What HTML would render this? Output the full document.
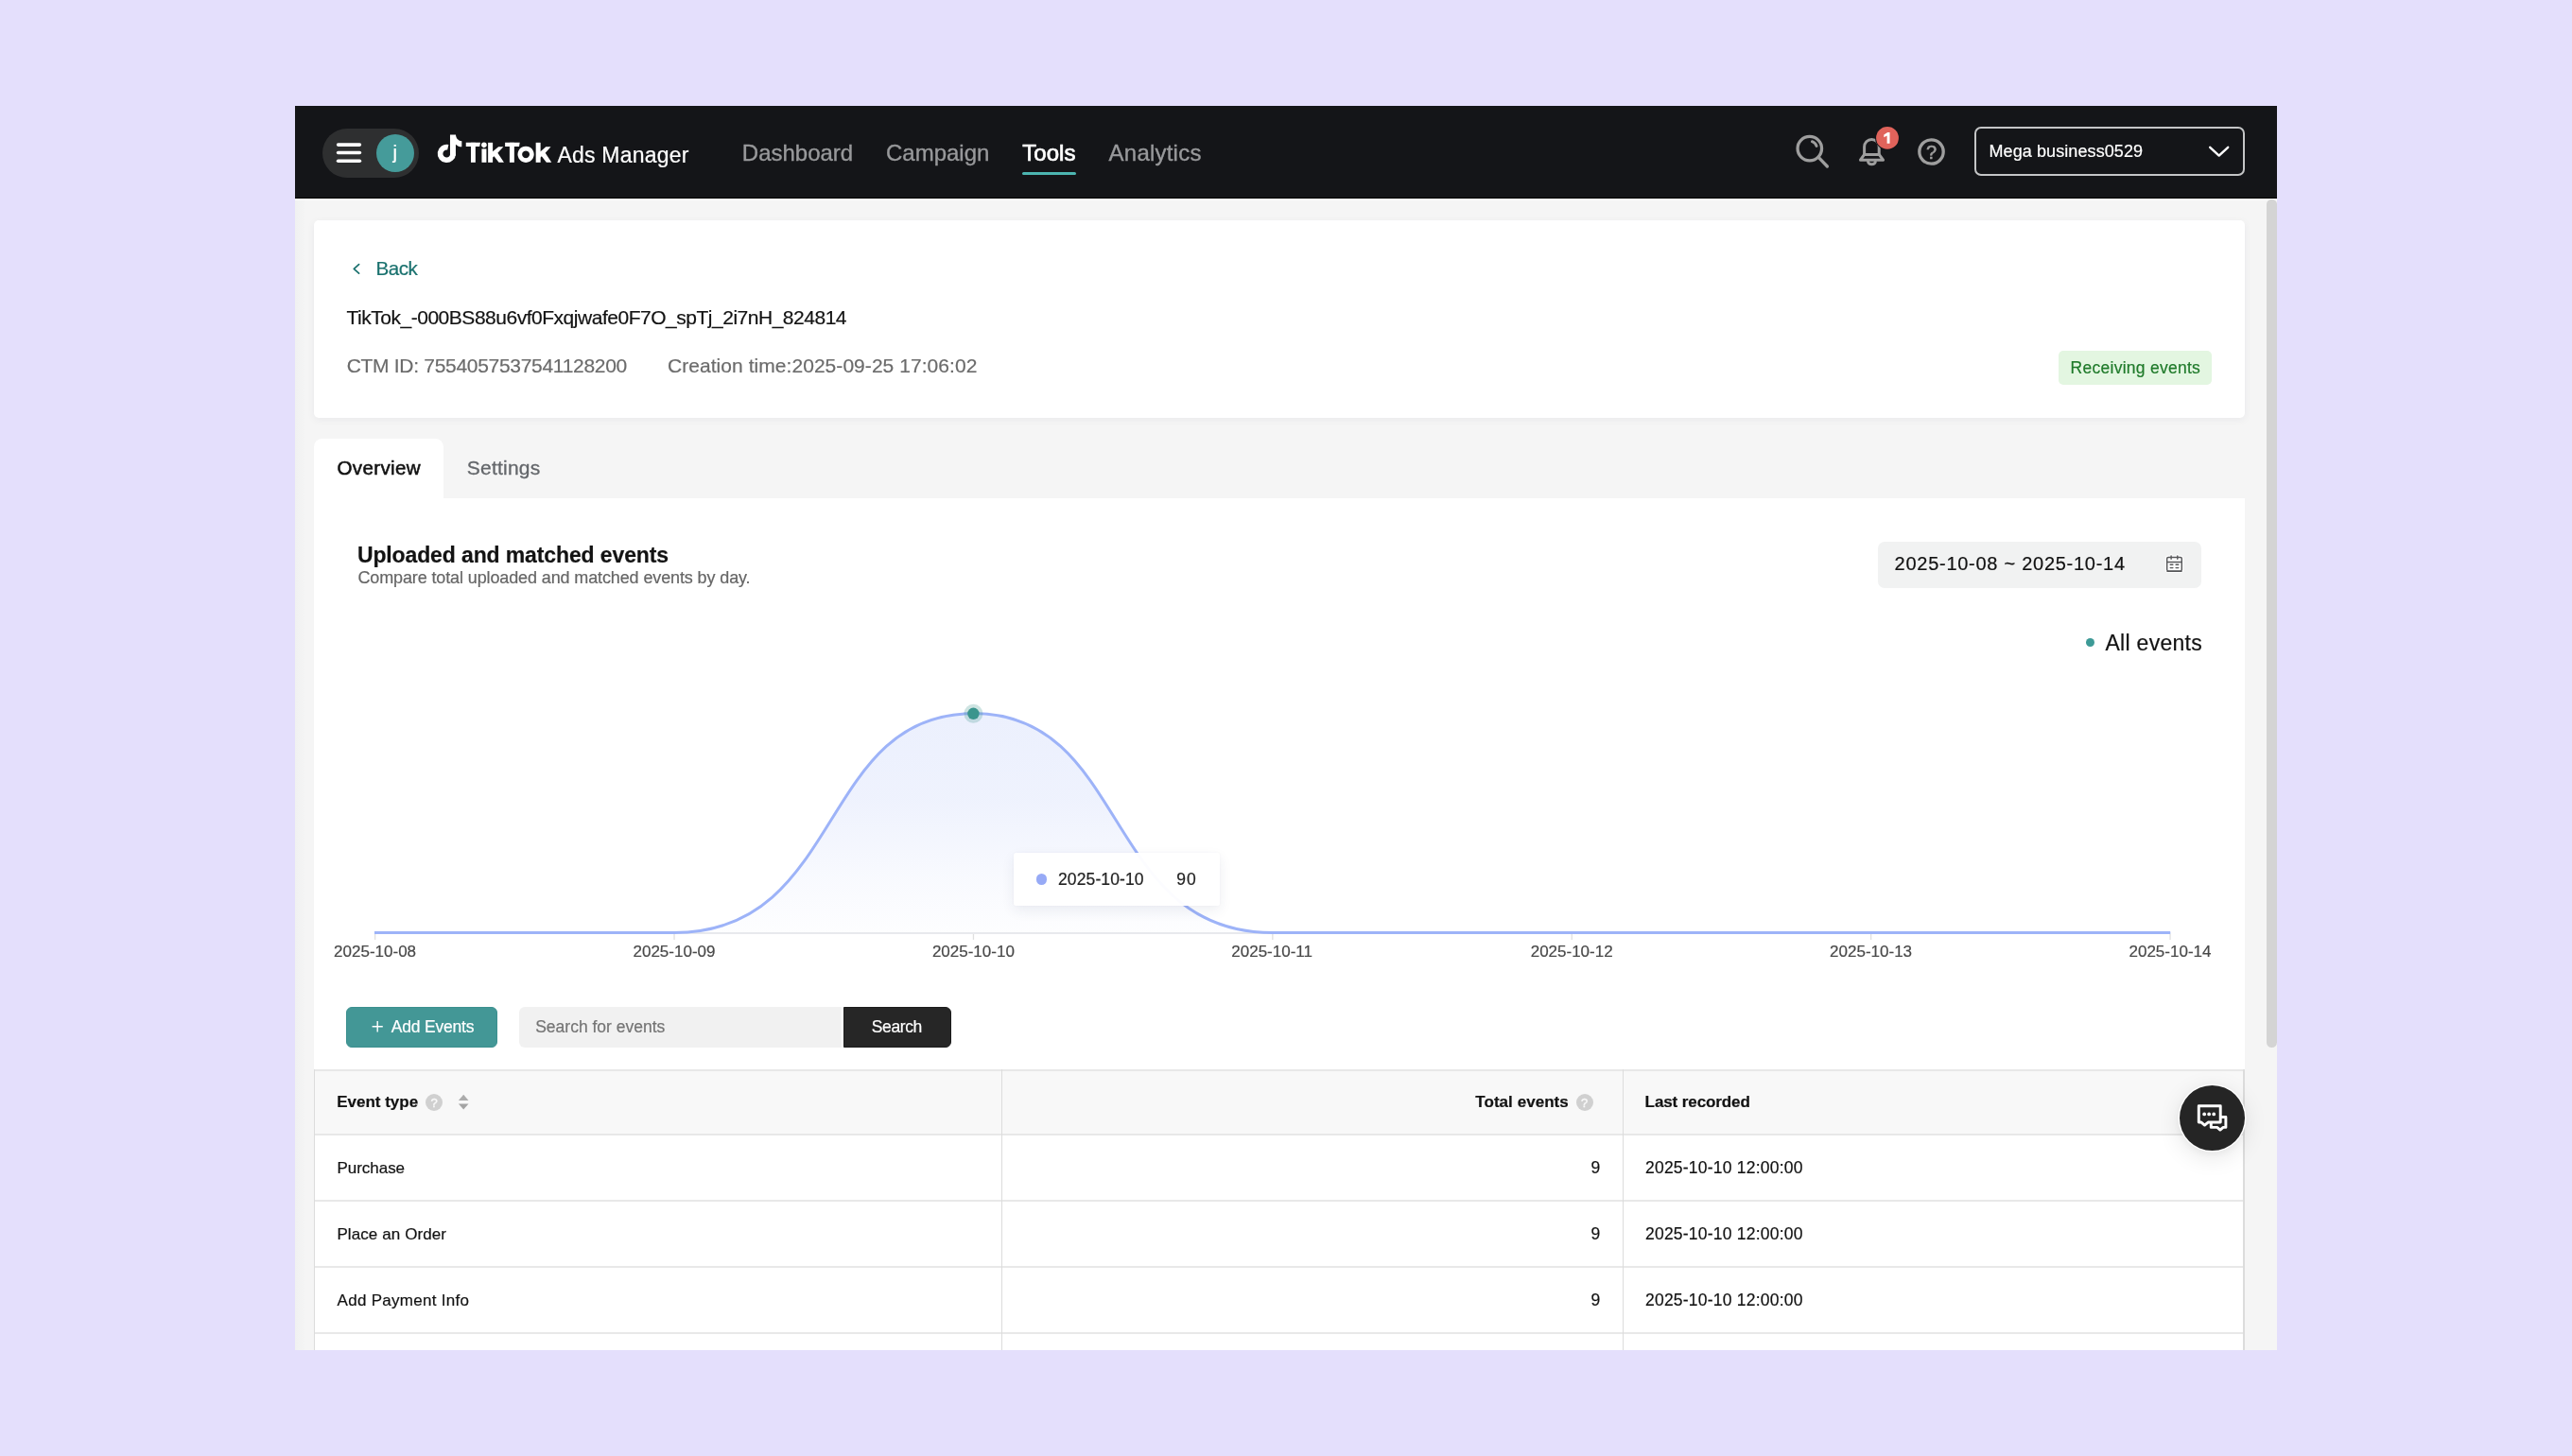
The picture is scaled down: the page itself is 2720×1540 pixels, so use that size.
<!DOCTYPE html>
<html lang="en">
<head>
<meta charset="utf-8">
<title>TikTok Ads Manager</title>
<style>
html,body{margin:0;padding:0;}
body{width:2720px;height:1540px;overflow:hidden;background:#e4dffc;font-family:"Liberation Sans",sans-serif;position:relative;}
#win{position:absolute;left:312px;top:112px;width:2096px;height:1316px;overflow:hidden;background:#f5f5f5;}
#g{position:absolute;left:-312px;top:-112px;width:2720px;height:1540px;will-change:transform;}
.a{position:absolute;}
.t{position:absolute;white-space:nowrap;line-height:1;color:#121212;-webkit-text-stroke-width:0.2px;}
.b{font-weight:700;}
/* nav */
#nav{left:312px;top:112px;width:2096px;height:98px;background:#141518;border-bottom:1px solid #000;box-sizing:border-box;}
.nv{font-size:24px;color:#98999b;top:150.1px;-webkit-text-stroke:0.35px #98999b;}
/* cards */
.card{background:#fff;border-radius:5px;box-shadow:0 2px 8px rgba(30,40,70,0.055),0 0 2px rgba(30,40,70,0.03);}
.hl{background:#e8e8e8;height:2px;}
.vl{background:#dcdcdc;width:1.5px;}
</style>
</head>
<body>
<div id="win"><div id="g">

<!-- ============ NAV ============ -->
<div class="a" style="left:312px;top:210px;width:2096px;height:2px;background:#fcfcfc;"></div>
<div class="a" style="left:312px;top:212px;width:12px;height:1300px;background:linear-gradient(90deg,#f0f1f1,#f5f5f5);"></div>
<div id="nav" class="a"></div>
<!-- pill: hamburger + avatar -->
<div class="a" style="left:341px;top:136px;width:102px;height:52px;border-radius:26px;background:#2e2f30;"></div>
<svg class="a" style="left:350px;top:146px" width="40" height="32" viewBox="0 0 40 32"><g stroke="#fff" stroke-width="3.6" stroke-linecap="round"><line x1="7.6" y1="7.1" x2="30.4" y2="7.1"/><line x1="7.6" y1="15.5" x2="30.4" y2="15.5"/><line x1="7.6" y1="24.3" x2="30.4" y2="24.3"/></g></svg>
<div class="a" style="left:398px;top:141.5px;width:40px;height:40px;border-radius:50%;background:#459b9a;"></div>
<div class="t" style="left:415.4px;top:151.2px;font-size:20.5px;color:#fff;">j</div>

<!-- TikTok note icon -->
<svg class="a" style="left:455px;top:135px" width="140" height="45" viewBox="0 0 2572 827">
 <path d="M345 383 A125 125 0 1 0 443 507" fill="none" stroke="#fff" stroke-width="104"/>
 <path d="M385 140 H495 C502 215 548 262 612 262 V372 C565 372 525 355 495 325 V548 H385 Z" fill="#fff"/>
</svg>
<!-- TikTok wordmark -->
<svg class="a" style="left:490px;top:145px" width="100" height="33" viewBox="0 0 2572 849"><g fill="#fff">
 <polygon points="70,150 462,150 442,255 70,255"/><rect x="205" y="150" width="125" height="540"/>
 <circle cx="563" cy="215" r="72"/><rect x="500" y="320" width="128" height="370"/>
 <rect x="672" y="150" width="128" height="540"/><polygon points="740,395 800,395 955,262 1090,262 935,430 1105,690 965,690 835,520 800,550 740,550"/>
 <polygon points="1135,150 1537,150 1517,255 1135,255"/><rect x="1258" y="150" width="127" height="540"/>
 <path fill-rule="evenodd" d="M1700 248 a222 222 0 1 0 0.01 0 Z M1700 370 a100 100 0 1 1 -0.01 0 Z"/>
 <rect x="1972" y="150" width="128" height="540"/><polygon points="2040,395 2100,395 2245,262 2380,262 2230,430 2400,690 2260,690 2130,520 2100,550 2040,550"/>
</g></svg>
<div class="t" style="left:589.5px;top:153.2px;font-size:23px;letter-spacing:0.2px;color:#fff;">Ads Manager</div>

<!-- nav links -->
<div class="t nv" style="left:784.8px;">Dashboard</div>
<div class="t nv" style="left:937px;">Campaign</div>
<div class="t nv" style="left:1081.2px;color:#fff;-webkit-text-stroke:0.7px #fff;letter-spacing:0.05px;">Tools</div>
<div class="a" style="left:1081px;top:181.6px;width:57px;height:3.2px;border-radius:2px;background:#4cb5b0;"></div>
<div class="t nv" style="left:1172.6px;letter-spacing:0.22px;">Analytics</div>

<!-- right icons -->
<svg class="a" style="left:1885px;top:125px" width="190" height="70" viewBox="1885 125 190 70"><g fill="none" stroke="#9e9e9e" stroke-linecap="round" stroke-linejoin="round">
 <circle cx="1913.8" cy="157.1" r="12.75" stroke-width="3.3"/><line x1="1923.4" y1="166.7" x2="1932.4" y2="176" stroke-width="3.3"/><path d="M1916.4 149.7 A7.8 7.8 0 0 1 1921.1 154.5" stroke-width="2.9"/>
 <g stroke-width="3"><path d="M1971.6 163.4 V155.3 A7.8 7.8 0 0 1 1987.2 155.3 V163.4"/><path d="M1971.6 163.4 H1987.2 L1991.5 169.2 H1967.5 Z"/><path d="M1975.6 171.2 A3.9 3 0 0 0 1983.3 171.2"/></g>
 <circle cx="2042.5" cy="160.5" r="12.7" stroke-width="3.3"/></g>
 <circle cx="1996" cy="145.9" r="12.9" fill="#141518"/><circle cx="1996" cy="145.9" r="11.9" fill="#e0635b"/><path d="M1998.5 139.9 V151.7 H1995.6 V143.5 L1992.3 145.3 V142.6 L1996.2 139.9 Z" fill="#fff"/></svg>
<div class="t" style="left:2036.9px;top:150.9px;font-size:20px;color:#9e9e9e;-webkit-text-stroke:0.55px #9e9e9e;">?</div>

<!-- account dropdown -->
<div class="a" style="left:2088px;top:134px;width:286px;height:52px;box-sizing:border-box;border:2px solid #c4c5c6;border-radius:7px;"></div>
<div class="t" style="left:2103.5px;top:150.8px;font-size:18px;letter-spacing:0.09px;color:#fff;">Mega business0529</div>
<svg class="a" style="left:2330px;top:148px" width="34" height="24" viewBox="0 0 34 24"><path d="M7.2 7.8 L16.7 16.6 L26.2 7.8" fill="none" stroke="#fff" stroke-width="2.4" stroke-linecap="round" stroke-linejoin="round"/></svg>

<!-- ============ HEADER CARD ============ -->
<div class="a card" style="left:332px;top:233px;width:2042px;height:209px;"></div>
<svg class="a" style="left:366px;top:274px" width="22" height="22" viewBox="0 0 22 22"><path d="M13.6 5.6 L8.3 10.4 L13.6 15.2" fill="none" stroke="#1a716e" stroke-width="1.7" stroke-linecap="round" stroke-linejoin="round"/></svg>
<div class="t" style="left:397.5px;top:274.3px;font-size:20.6px;letter-spacing:-0.5px;color:#1a716e;">Back</div>
<div class="t" style="left:366.5px;top:325.2px;font-size:21px;letter-spacing:-0.48px;">TikTok_-000BS88u6vf0Fxqjwafe0F7O_spTj_2i7nH_824814</div>
<div class="t" style="left:366.7px;top:375.8px;font-size:21px;letter-spacing:-0.3px;color:#6b6b6b;">CTM ID: 7554057537541128200</div>
<div class="t" style="left:706px;top:375.8px;font-size:21px;letter-spacing:0.05px;color:#6b6b6b;">Creation time:2025-09-25 17:06:02</div>
<div class="a" style="left:2177.3px;top:370.5px;width:161.4px;height:36.2px;border-radius:5px;background:#e3f6e1;"></div>
<div class="t" style="left:2189.6px;top:381px;font-size:17.5px;letter-spacing:0.26px;color:#1f7a2a;">Receiving events</div>

<!-- ============ TABS + PANEL ============ -->
<div class="a" style="left:332px;top:464px;width:137px;height:70px;border-radius:8.5px 8.5px 0 0;background:#fff;"></div>
<div class="a" style="left:332px;top:527px;width:2042px;height:1000px;background:#fff;"></div>
<div class="t" style="left:356.4px;top:484.7px;font-size:20.5px;letter-spacing:0.4px;-webkit-text-stroke:0.55px #121212;">Overview</div>
<div class="t" style="left:493.8px;top:483.7px;font-size:21px;letter-spacing:0.22px;color:#63666a;-webkit-text-stroke:0.3px #63666a;">Settings</div>
<div class="t b" style="left:377.9px;top:576.2px;font-size:23px;letter-spacing:-0.12px;">Uploaded and matched events</div>
<div class="t" style="left:378.4px;top:601.9px;font-size:18px;letter-spacing:-0.12px;color:#666;">Compare total uploaded and matched events by day.</div>
<div class="a" style="left:1985.5px;top:573px;width:342.5px;height:48.5px;border-radius:7px;background:#f1f2f2;"></div>
<div class="t" style="left:2003.6px;top:586.4px;font-size:20px;letter-spacing:0.73px;">2025-10-08 ~ 2025-10-14</div>
<svg class="a" style="left:2280px;top:580px" width="40" height="32" viewBox="2280 580 40 32"><rect x="2289.9" y="587.4" width="19.2" height="18.6" rx="3" fill="#fff" fill-opacity="0.92"/><rect x="2295" y="586" width="2.2" height="4" fill="#fff" fill-opacity="0.9"/><rect x="2301.7" y="586" width="2.2" height="4" fill="#fff" fill-opacity="0.9"/><g fill="none" stroke="#58595b" stroke-width="1.45" stroke-linecap="round"><rect x="2291.7" y="589.4" width="15.6" height="14.6" rx="1.4" fill="#fff"/><line x1="2291.7" y1="594.5" x2="2307.3" y2="594.5"/><line x1="2291.9" y1="604.3" x2="2307.1" y2="604.3" stroke-width="1.2"/><line x1="2296.1" y1="588" x2="2296.1" y2="591.3"/><line x1="2302.8" y1="588" x2="2302.8" y2="591.3"/><line x1="2295.2" y1="597.3" x2="2297.9" y2="597.3"/><line x1="2301.1" y1="597.3" x2="2303.8" y2="597.3"/><line x1="2295.2" y1="600.6" x2="2297.9" y2="600.6"/><line x1="2301.1" y1="600.6" x2="2303.8" y2="600.6"/></g></svg>
<div class="a" style="left:2205.8px;top:675.4px;width:9px;height:9px;border-radius:50%;background:#3d9a96;"></div>
<div class="t" style="left:2226.5px;top:668.9px;font-size:23px;letter-spacing:0.28px;">All events</div>

<!-- ============ CHART ============ -->
<svg class="a" style="left:332px;top:700px" width="2042" height="330" viewBox="332 700 2042 330">
 <defs><linearGradient id="ag" x1="0" y1="754" x2="0" y2="987" gradientUnits="userSpaceOnUse"><stop offset="0" stop-color="#9fb4f6" stop-opacity="0.2"/><stop offset="0.4" stop-color="#9fb4f6" stop-opacity="0.17"/><stop offset="0.75" stop-color="#9fb4f6" stop-opacity="0.07"/><stop offset="1" stop-color="#9fb4f6" stop-opacity="0.02"/></linearGradient></defs>
 <rect x="396" y="986" width="1899.5" height="2" fill="#e8e9ed"/>
 <rect x="396.0" y="988" width="1.3" height="6" fill="#e0e0e0"/><rect x="712.4" y="988" width="1.3" height="6" fill="#e0e0e0"/><rect x="1028.8" y="988" width="1.3" height="6" fill="#e0e0e0"/><rect x="1345.2" y="988" width="1.3" height="6" fill="#e0e0e0"/><rect x="1661.6" y="988" width="1.3" height="6" fill="#e0e0e0"/><rect x="1978.0" y="988" width="1.3" height="6" fill="#e0e0e0"/><rect x="2294.4" y="988" width="1.3" height="6" fill="#e0e0e0"/>
 <path d="M713.1 986.5 C893.1 986.5 864.5 754.6 1029.5 754.6 C1194.5 754.6 1165.9 986.5 1345.9 986.5 Z" fill="url(#ag)"/>
 <path d="M396 986.5 L713.1 986.5 C893.1 986.5 864.5 754.6 1029.5 754.6 C1194.5 754.6 1165.9 986.5 1345.9 986.5 L2295.2 986.5" fill="none" stroke="#9db3f8" stroke-width="3" stroke-linejoin="round"/>
 <circle cx="1029.4" cy="754.8" r="10" fill="#3b958d" fill-opacity="0.25"/>
 <circle cx="1029.4" cy="754.8" r="6.2" fill="#3b958d"/>
</svg>
<div class="t" style="left:353.1px;top:997.8px;font-size:17px;color:#484848;">2025-10-08</div>
<div class="t" style="left:669.5px;top:997.8px;font-size:17px;color:#484848;">2025-10-09</div>
<div class="t" style="left:985.9px;top:997.8px;font-size:17px;color:#484848;">2025-10-10</div>
<div class="t" style="left:1302.3px;top:997.8px;font-size:17px;color:#484848;">2025-10-11</div>
<div class="t" style="left:1618.7px;top:997.8px;font-size:17px;color:#484848;">2025-10-12</div>
<div class="t" style="left:1935.1px;top:997.8px;font-size:17px;color:#484848;">2025-10-13</div>
<div class="t" style="left:2251.5px;top:997.8px;font-size:17px;color:#484848;">2025-10-14</div>
<div class="a" style="left:1071.7px;top:902px;width:218.5px;height:56px;border-radius:3px;background:rgba(255,255,255,0.965);box-shadow:0 5px 14px rgba(40,50,90,0.08),0 0 3px rgba(40,50,90,0.04);"></div>
<div class="a" style="left:1095.8px;top:924.4px;width:11.4px;height:11.4px;border-radius:50%;background:#97aaf6;"></div>
<div class="t" style="left:1119px;top:921.7px;font-size:17.5px;letter-spacing:0.12px;color:#222;">2025-10-10</div>
<div class="t" style="left:1244.2px;top:921.7px;font-size:17.5px;letter-spacing:1.1px;color:#222;">90</div>

<!-- ============ ACTIONS + TABLE ============ -->
<div class="a" style="left:366px;top:1065px;width:160px;height:43px;box-sizing:border-box;border-radius:6px;background:#439796;border:1px solid #3c908f;"></div>
<svg class="a" style="left:390px;top:1076px" width="20" height="20" viewBox="0 0 20 20"><path d="M9.2 4 V15.6 M3.6 9.8 H14.8" stroke="#fff" stroke-width="1.4" fill="none"/></svg>
<div class="t" style="left:413.7px;top:1078px;font-size:17.5px;letter-spacing:-0.19px;color:#fff;">Add Events</div>
<div class="a" style="left:549px;top:1065px;width:341px;height:43px;border-radius:6px 0 0 6px;background:#f1f1f1;"></div>
<div class="t" style="left:566.2px;top:1078.1px;font-size:17.5px;letter-spacing:0px;color:#747474;">Search for events</div>
<div class="a" style="left:892px;top:1065px;width:114px;height:43px;box-sizing:border-box;border-radius:0 6px 6px 0;background:#262626;border:1px solid #1c1c1c;"></div>
<div class="t" style="left:921.8px;top:1077.8px;font-size:17.5px;letter-spacing:-0.4px;color:#fff;">Search</div>

<!-- table -->
<div class="a" style="left:332px;top:1133px;width:2042px;height:66px;background:#f8f8f8;"></div>
<div class="a hl" style="left:332px;top:1131px;width:2042px;"></div>
<div class="a hl" style="left:332px;top:1199px;width:2042px;"></div>
<div class="a hl" style="left:332px;top:1268.7px;width:2042px;"></div>
<div class="a hl" style="left:332px;top:1338.8px;width:2042px;"></div>
<div class="a hl" style="left:332px;top:1408.7px;width:2042px;"></div>
<div class="a vl" style="left:332.1px;top:1131px;height:320px;width:1.1px;"></div>
<div class="a vl" style="left:1058.75px;top:1131px;height:320px;"></div>
<div class="a vl" style="left:1715.6px;top:1131px;height:320px;"></div>
<div class="a vl" style="left:2372.3px;top:1131px;height:320px;"></div>

<div class="t b" style="left:356.2px;top:1157.1px;font-size:17px;">Event type</div>
<div class="a" style="left:450px;top:1157.3px;width:18px;height:18px;border-radius:50%;background:#d0d0d0;"></div>
<div class="t" style="left:455.4px;top:1159.9px;font-size:13px;color:#fafafa;-webkit-text-stroke-width:0.35px;">?</div>
<svg class="a" style="left:483px;top:1155px" width="16" height="22" viewBox="0 0 16 22"><path d="M7.2 2.8 L12.5 8.9 H1.9 Z" fill="#acacac"/><path d="M7.2 18.4 L12.5 12.4 H1.9 Z" fill="#a4a4a4"/></svg>
<div class="t b" style="left:1560.3px;top:1157.1px;font-size:17px;letter-spacing:0.05px;">Total events</div>
<div class="a" style="left:1666.7px;top:1157.2px;width:18px;height:18px;border-radius:50%;background:#d0d0d0;"></div>
<div class="t" style="left:1672.1px;top:1159.8px;font-size:13px;color:#fafafa;-webkit-text-stroke-width:0.35px;">?</div>
<div class="t b" style="left:1739.6px;top:1157.1px;font-size:17px;letter-spacing:-0.1px;">Last recorded</div>

<div class="t" style="left:356.4px;top:1226.5px;font-size:17px;letter-spacing:-0.02px;">Purchase</div>
<div class="t" style="left:356.4px;top:1296.5px;font-size:17px;letter-spacing:0.1px;">Place an Order</div>
<div class="t" style="left:356.6px;top:1366.5px;font-size:17px;letter-spacing:0.28px;">Add Payment Info</div>
<div class="t" style="left:1682.4px;top:1226.6px;font-size:17.5px;">9</div>
<div class="t" style="left:1682.4px;top:1296.6px;font-size:17.5px;">9</div>
<div class="t" style="left:1682.4px;top:1366.6px;font-size:17.5px;">9</div>
<div class="t" style="left:1740px;top:1226.6px;font-size:17.5px;letter-spacing:0.22px;">2025-10-10 12:00:00</div>
<div class="t" style="left:1740px;top:1296.6px;font-size:17.5px;letter-spacing:0.22px;">2025-10-10 12:00:00</div>
<div class="t" style="left:1740px;top:1366.6px;font-size:17.5px;letter-spacing:0.22px;">2025-10-10 12:00:00</div>

<!-- ============ OVERLAYS ============ -->
<!-- scrollbar -->
<div class="a" style="left:2397px;top:210.5px;width:11px;height:897px;border-radius:5px 5px 5.5px 5.5px;background:#d4d4d4;"></div>
<!-- chat fab -->
<div class="a" style="left:2305.1px;top:1148.1px;width:68.8px;height:68.8px;border-radius:50%;background:#252525;box-shadow:0 0 0 1.5px rgba(255,255,255,0.95),0 6px 26px rgba(0,0,0,0.11),0 2px 8px rgba(0,0,0,0.05);"></div>
<svg class="a" style="left:2300px;top:1145px" width="80" height="75" viewBox="0 0 1553 1456"><g stroke="#fff" stroke-width="57" stroke-linejoin="round">
 <path d="M743 709 H1046 V920 H992 L930 972 L868 920 H743 Z" fill="#252525"/>
 <path d="M491 479 H936 V817 H682 L612 874 L543 817 H491 Z" fill="#252525"/></g>
 <g fill="#fff"><circle cx="605" cy="648" r="36"/><circle cx="702" cy="648" r="36"/><circle cx="800" cy="648" r="36"/></g></svg>

</div></div>
</body>
</html>
